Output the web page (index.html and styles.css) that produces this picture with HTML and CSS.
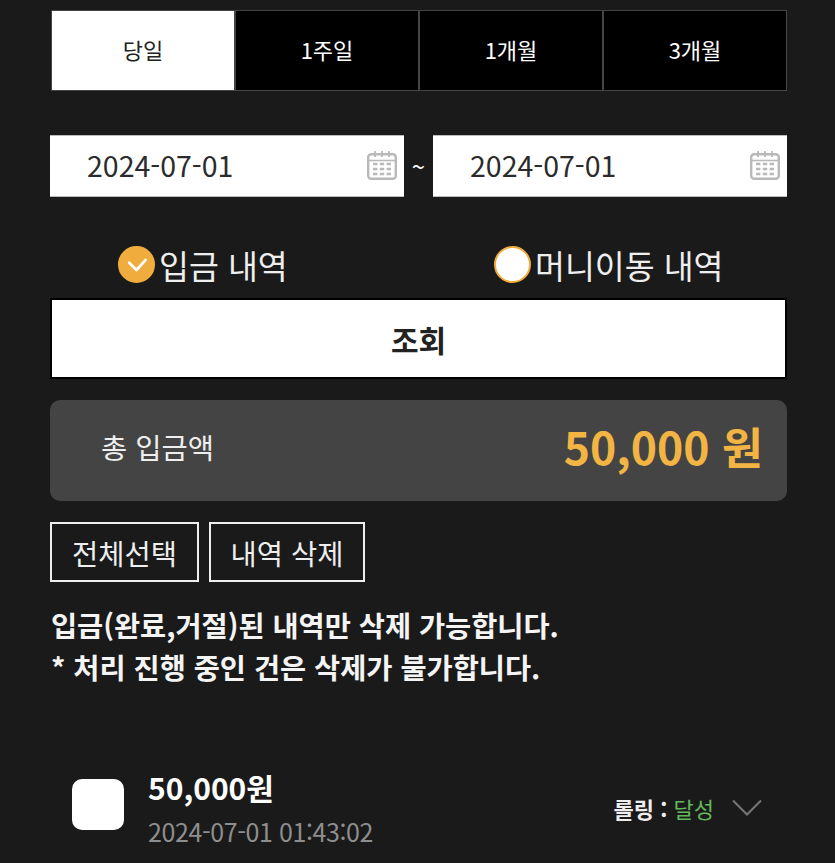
FILE: index.html
```html
<!DOCTYPE html>
<html lang="ko">
<head>
<meta charset="utf-8">
<title>입금 내역</title>
<link rel="stylesheet" href="styles.css">
</head>
<body>
<main class="page">
  <div class="tabs">
    <button class="tab tab-active">당일</button>
    <button class="tab">1주일</button>
    <button class="tab">1개월</button>
    <button class="tab">3개월</button>
  </div>
  <div class="dates">
    <div class="date"><span>2024-07-01</span>
      <svg class="cal" viewBox="0 0 30 30" fill="none"><rect x="1.2" y="4.2" width="27.6" height="24.6" rx="3" stroke="#b9b9b9" stroke-width="2.4"/><path d="M2 10.5h26" stroke="#b9b9b9" stroke-width="1.6"/><path d="M8 1v6M15 1v6M22 1v6" stroke="#b9b9b9" stroke-width="1.8"/><path d="M6 14h4.4M12.8 14h4.4M19.6 14h4.4M6 19h4.4M12.8 19h4.4M19.6 19h4.4M6 24h4.4M12.8 24h4.4M19.6 24h4.4" stroke="#b9b9b9" stroke-width="2.6"/></svg>
    </div>
    <span class="tilde">~</span>
    <div class="date"><span>2024-07-01</span>
      <svg class="cal" viewBox="0 0 30 30" fill="none"><rect x="1.2" y="4.2" width="27.6" height="24.6" rx="3" stroke="#b9b9b9" stroke-width="2.4"/><path d="M2 10.5h26" stroke="#b9b9b9" stroke-width="1.6"/><path d="M8 1v6M15 1v6M22 1v6" stroke="#b9b9b9" stroke-width="1.8"/><path d="M6 14h4.4M12.8 14h4.4M19.6 14h4.4M6 19h4.4M12.8 19h4.4M19.6 19h4.4M6 24h4.4M12.8 24h4.4M19.6 24h4.4" stroke="#b9b9b9" stroke-width="2.6"/></svg>
    </div>
  </div>
  <div class="radios">
    <label class="radio radio-deposit"><span class="dot dot-on"><svg viewBox="0 0 36 36" fill="none"><path d="M10 16L18 24 28 13" stroke="#fff" stroke-width="3" stroke-linecap="round" stroke-linejoin="round"/></svg></span>입금 내역</label>
    <label class="radio radio-move"><span class="dot"></span>머니이동 내역</label>
  </div>
  <button class="search">조회</button>
  <div class="total">
    <span class="total-label">총 입금액</span>
    <strong class="total-value">50,000 원</strong>
  </div>
  <div class="actions">
    <button class="action action-select">전체선택</button>
    <button class="action action-delete">내역 삭제</button>
  </div>
  <p class="notice">입금(완료,거절)된 내역만 삭제 가능합니다.<br>* 처리 진행 중인 건은 삭제가 불가합니다.</p>
  <div class="row">
    <span class="check"></span>
    <div class="info">
      <div class="amount">50,000원</div>
      <div class="time">2024-07-01 01:43:02</div>
    </div>
    <div class="status"><b>롤링 :</b> <span class="ok">달성</span></div>
    <svg class="chev" viewBox="0 0 30 18" fill="none"><path d="M1 1.5L15 15.5 29 1.5" stroke="#777" stroke-width="2"/></svg>
  </div>
</main>
</body>
</html>
```

FILE: styles.css
```css
* { box-sizing: border-box; }
html, body { margin: 0; height: 100%; overflow: hidden; background: #1a1a1a; }
body { font-family: "Noto Sans CJK KR", "Noto Sans", sans-serif; color: #fff; }
button { font-family: inherit; cursor: pointer; }
.page { padding: 10px 48px 0 50px; }

.tabs { display: flex; height: 81px; margin-left: 1px; }
.tab { flex: 1 1 0; background: #000; color: #fff; border: 1px solid #444; font-size: 22px; padding: 0 0 3px; }
.tab-active { background: #fff; color: #222; }

.dates { display: flex; align-items: center; margin-top: 44px; height: 62px; }
.date { width: 354px; height: 62px; background: #fff; color: #2b2b2b; display: flex; align-items: center; justify-content: space-between; padding: 0 7px 0 37px; font-size: 28.5px; line-height: 40px; border-bottom: 1px solid #bbb; border-top: 1px solid #bbb; }
.date span { margin-top: -2px; }
.cal { width: 30px; height: 30px; margin-top: -2px; }
.tilde { width: 29px; text-align: center; font-size: 24px; color: #fff; margin-top: -1px; }

.radios { display: flex; height: 51px; margin-top: 42px; margin-bottom: 1px; }
.radio { display: flex; align-items: center; font-size: 32.5px; color: #eee; gap: 4px; }
.radio-deposit { width: 368px; padding-left: 68px; }
.radio-move { flex: 1; padding-left: 76px; }
.dot { width: 37px; height: 37px; border-radius: 50%; background: #fff; border: 2px solid #f0ad3e; flex: none; }
.dot-on { background: #f0ad3e; }
.dot svg { display: block; width: 33px; height: 33px; }

.search { display: block; width: 100%; height: 81px; margin-top: 8px; background: #fff; border: 2px solid #000; color: #222; font-size: 30px; font-weight: 700; padding: 0; }

.total { display: flex; align-items: center; justify-content: space-between; height: 101px; margin-top: 21px; padding: 0 24px 0 51px; background: #444; border-radius: 10px; }
.total-label { font-size: 28.5px; color: #eee; margin-top: -8px; }
.total-value { font-size: 44.5px; font-weight: 700; color: #f2b544; margin-top: -10px; }

.actions { display: flex; gap: 10px; margin-top: 21px; }
.action { height: 60px; background: transparent; border: 2px solid #eee; color: #eee; font-size: 28.5px; padding: 0; }
.action-select { width: 149px; }
.action-delete { width: 156px; }

.notice { margin: 22px 0 0 1px; font-size: 28.4px; line-height: 42px; font-weight: 700; color: #f4f4f4; }

.row { display: flex; align-items: center; margin-top: 77px; padding-left: 22px; }
.check { width: 52px; height: 51px; background: #fff; border-radius: 10px; flex: none; margin-top: -5px; }
.info { margin-left: 24px; flex: 1; }
.amount { font-size: 30px; font-weight: 700; line-height: 44px; }
.time { font-size: 25px; line-height: 36px; margin-top: 4px; color: #8e8e8e; letter-spacing: -0.4px; }
.status { font-size: 22px; margin-top: 2px; }
.status b { color: #eee; }
.ok { color: #62b85a; }
.chev { width: 30px; height: 18px; margin: 2px 25px 0 18px; }
```
